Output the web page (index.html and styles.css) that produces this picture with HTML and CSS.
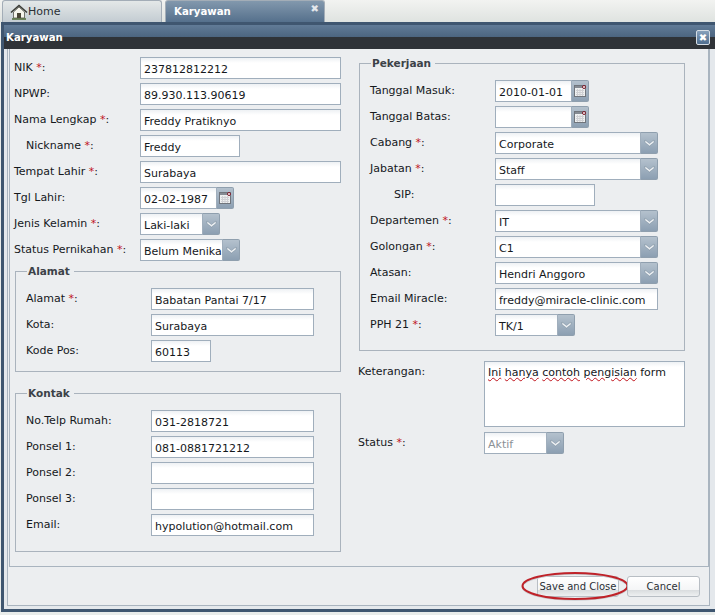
FILE: index.html
```html
<!DOCTYPE html>
<html lang="en">

<head>
    <meta charset="UTF-8">
    <title>Karyawan</title>
    <link rel="stylesheet" href="styles.css">
</head>

<body>
    <svg width="0" height="0" class="defs">
        <symbol id="cal" viewBox="0 0 16 16">
            <rect x="2.5" y="2.5" width="11" height="11" fill="#eef0f0" stroke="#70757c"/>
            <rect x="3" y="3" width="10" height="2" fill="#858b93"/>
            <path d="M4 7.500h8M4 9.500h8M4 11.500h8M5.500 6v7M8 6v7M10.500 6v7" stroke="#cfd0d4" fill="none"/>
            <circle cx="12" cy="4" r="1.500" fill="#fff" stroke="#7c1626"/>
        </symbol>
        <symbol id="chev" viewBox="0 0 17 22">
            <path d="M4 8l4.500 3.500 4.500-3.500v2.500l-4.500 3.500-4.500-3.500z" fill="#eef1f4" stroke="#66788c" stroke-width=".4"/>
        </symbol>
    </svg>

    <div class="tabs">
        <div class="tab home">
            <svg width="18" height="16" viewBox="0 0 18 16">
                <path d="M3.500 8v6h11V8L9 3z" fill="#f6f5ec" stroke="#55564c" stroke-width=".8"/>
                <path d="M1 8.500L9 1.500l8 7" fill="none" stroke="#3a3b34" stroke-width="1.600"/>
                <rect x="7" y="9" width="4" height="5" fill="#4a4636"/>
                <path d="M2 15h14" stroke="#4f6a34" stroke-width="1.500"/>
            </svg>
            <span>Home</span>
        </div>
        <div class="tab active">
            <span>Karyawan</span>
            <span class="tab-x">✖</span>
        </div>
    </div>

    <div class="window">
        <div class="title">
            <span>Karyawan</span>
            <span class="win-x">✖</span>
        </div>
        <div class="panel">
            <div class="form">
                <div class="col left">
                    <div class="row"><div class="lbl">NIK <b>*</b>:</div><div class="field w200">237812812212</div></div>
                    <div class="row"><div class="lbl">NPWP:</div><div class="field w200">89.930.113.90619</div></div>
                    <div class="row"><div class="lbl">Nama Lengkap <b>*</b>:</div><div class="field w200">Freddy Pratiknyo</div></div>
                    <div class="row"><div class="lbl sub">Nickname <b>*</b>:</div><div class="field w100">Freddy</div></div>
                    <div class="row"><div class="lbl">Tempat Lahir <b>*</b>:</div><div class="field w200">Surabaya</div></div>
                    <div class="row"><div class="lbl">Tgl Lahir:</div><div class="field w77">02-02-1987</div><div class="trig"><svg width="16" height="16"><use href="#cal"/></svg></div></div>
                    <div class="row"><div class="lbl">Jenis Kelamin <b>*</b>:</div><div class="field w62">Laki-laki</div><div class="trig"><svg width="17" height="22"><use href="#chev"/></svg></div></div>
                    <div class="row"><div class="lbl">Status Pernikahan <b>*</b>:</div><div class="field w82">Belum Menika</div><div class="trig"><svg width="17" height="22"><use href="#chev"/></svg></div></div>

                    <fieldset class="box alamat">
                        <legend>Alamat</legend>
                        <div class="row"><div class="lbl">Alamat <b>*</b>:</div><div class="field w163">Babatan Pantai 7/17</div></div>
                        <div class="row"><div class="lbl">Kota:</div><div class="field w163">Surabaya</div></div>
                        <div class="row"><div class="lbl">Kode Pos:</div><div class="field w60">60113</div></div>
                    </fieldset>

                    <fieldset class="box kontak">
                        <legend>Kontak</legend>
                        <div class="row"><div class="lbl">No.Telp Rumah:</div><div class="field w163">031-2818721</div></div>
                        <div class="row"><div class="lbl">Ponsel 1:</div><div class="field w163">081-0881721212</div></div>
                        <div class="row"><div class="lbl">Ponsel 2:</div><div class="field w163"></div></div>
                        <div class="row"><div class="lbl">Ponsel 3:</div><div class="field w163"></div></div>
                        <div class="row"><div class="lbl">Email:</div><div class="field w163">hypolution@hotmail.com</div></div>
                    </fieldset>
                </div>

                <div class="col right">
                    <fieldset class="box kerja">
                        <legend>Pekerjaan</legend>
                        <div class="row"><div class="lbl">Tanggal Masuk:</div><div class="field w77">2010-01-01</div><div class="trig"><svg width="16" height="16"><use href="#cal"/></svg></div></div>
                        <div class="row"><div class="lbl">Tanggal Batas:</div><div class="field w77"></div><div class="trig"><svg width="16" height="16"><use href="#cal"/></svg></div></div>
                        <div class="row"><div class="lbl">Cabang <b>*</b>:</div><div class="field w146">Corporate</div><div class="trig"><svg width="17" height="22"><use href="#chev"/></svg></div></div>
                        <div class="row"><div class="lbl">Jabatan <b>*</b>:</div><div class="field w146">Staff</div><div class="trig"><svg width="17" height="22"><use href="#chev"/></svg></div></div>
                        <div class="row"><div class="lbl sub2">SIP:</div><div class="field w100">&nbsp;</div></div>
                        <div class="row"><div class="lbl">Departemen <b>*</b>:</div><div class="field w146">IT</div><div class="trig"><svg width="17" height="22"><use href="#chev"/></svg></div></div>
                        <div class="row"><div class="lbl">Golongan <b>*</b>:</div><div class="field w146">C1</div><div class="trig"><svg width="17" height="22"><use href="#chev"/></svg></div></div>
                        <div class="row"><div class="lbl">Atasan:</div><div class="field w146">Hendri Anggoro</div><div class="trig"><svg width="17" height="22"><use href="#chev"/></svg></div></div>
                        <div class="row"><div class="lbl">Email Miracle:</div><div class="field w163">freddy@miracle-clinic.com</div></div>
                        <div class="row"><div class="lbl">PPH 21 <b>*</b>:</div><div class="field w63">TK/1</div><div class="trig"><svg width="17" height="22"><use href="#chev"/></svg></div></div>
                    </fieldset>

                    <div class="row ket"><div class="lbl">Keterangan:</div><div class="field area"><u>Ini</u> <u>hanya</u> <u>contoh</u> <u>pengisian</u> form</div></div>
                    <div class="row"><div class="lbl">Status <b>*</b>:</div><div class="field w63 off">Aktif</div><div class="trig"><svg width="17" height="22"><use href="#chev"/></svg></div></div>
                </div>
            </div>
            <div class="foot">
                <div class="btn save">Save and Close
                    <svg class="ring" width="108" height="29" viewBox="0 0 108 29">
                        <ellipse cx="54" cy="15" rx="52.500" ry="13" fill="none" stroke="#c9ccd0" stroke-width="1.500"/>
                        <ellipse cx="54" cy="14" rx="52.500" ry="13" fill="none" stroke="#bf2229" stroke-width="2"/>
                    </svg>
                </div>
                <div class="btn">Cancel</div>
            </div>
        </div>
    </div>
</body>

</html>
```

FILE: styles.css
```css
* {
    box-sizing: border-box;
}

body {
    margin: 0;
    width: 715px;
    height: 615px;
    overflow: hidden;
    background-color: #e9ecea;
    color: #15181c;
    font-family: "DejaVu Sans", sans-serif;
    font-size: 11px;
}

.defs {
    position: absolute;
}

.tabs {
    display: flex;
    gap: 3px;
    height: 22px;
    padding-left: 2px;
    background: linear-gradient(#f2f3f1, #dfe3e0);
}

.tab {
    display: flex;
    align-items: center;
    width: 160px;
    border: 1px solid #a3adb7;
    border-bottom: none;
    border-radius: 3px 3px 0 0;
}

.home {
    gap: 0;
    padding-left: 7px;
    background: linear-gradient(#e4e8e8, #c3ccd2);
    color: #2a3036;
}

.active {
    justify-content: space-between;
    padding: 0 5px 0 8px;
    background: linear-gradient(#8298ad, #55708c);
    color: #fff;
    font-size: 10.2px;
    font-weight: bold;
}

.tab-x {
    font-size: 10px;
    color: #e4e8ec;
    margin-top: -6px;
}

.window {
    height: 590px;
    margin-left: 1px;
    border: 3px solid #3f5670;
    border-right: none;
    background-color: #e4e8ec;
}

.title {
    display: flex;
    justify-content: space-between;
    height: 24px;
    padding: 7px 5px 0 2px;
    background: linear-gradient(#617b97 0, #4c6580 12px, #2f3338 12px, #2f3338 100%);
    color: #fff;
    font-size: 10.2px;
    font-weight: bold;
}

.win-x {
    width: 14px;
    height: 15px;
    margin-top: -2px;
    border: 1px solid #d5dde5;
    border-radius: 2px;
    background: linear-gradient(#86a0bb, #4f6e8f);
    font-size: 10px;
    line-height: 13px;
    text-align: center;
}

.panel {
    height: 557px;
    margin: 0 5px 0 3px;
    border: 1px solid #a9b4bf;
    border-top: none;
    background-color: #eceef0;
}

.form {
    display: flex;
    height: 518px;
    margin-left: 1px;
    padding: 8px 0 0 4px;
    border: 1px solid #a9b4bf;
    border-top: none;
}

.col {
    flex: none;
}

.left {
    width: 344px;
}

.row {
    display: flex;
    height: 22px;
    margin-bottom: 4px;
}

.left > .row .lbl {
    width: 126px;
}

.box .lbl {
    width: 125px;
}

.right > .row .lbl {
    width: 126px;
}

.lbl {
    padding-top: 2px;
    line-height: 17px;
    white-space: nowrap;
}

.lbl b {
    color: #c0141c;
    font-weight: normal;
}

.left > .row .sub {
    padding-left: 12px;
}

.box .sub2 {
    padding-left: 24px;
}

.field {
    height: 22px;
    padding: 3px 0 0 3px;
    border: 1px solid #a0aebc;
    background: linear-gradient(#eef1f4, #fff 5px);
    line-height: 17px;
    white-space: nowrap;
    overflow: hidden;
}

.w200 { width: 201px; }
.w163 { width: 163px; }
.w146 { width: 146px; }
.w100 { width: 100px; }
.w82 { width: 83px; }
.w77 { width: 77px; }
.w63 { width: 63px; }
.w62 { width: 63px; }
.w60 { width: 60px; }

.off {
    color: #8b9096;
}

.trig {
    display: flex;
    align-items: center;
    justify-content: center;
    width: 17px;
    height: 22px;
    border: 1px solid #8f9fae;
    border-left: none;
    border-radius: 0 2px 2px 0;
    background: linear-gradient(#b4c1cd, #8c9fb2);
}

.trig svg {
    flex: none;
}

.box {
    margin: 0;
    padding: 10px 0 0 10px;
    border: 1px solid #aab3bd;
}

.box legend {
    margin-left: 1px;
    padding: 0 4px 0 1px;
    color: #3c4248;
    font-size: 10.5px;
    font-weight: bold;
    line-height: 14px;
}

.alamat {
    width: 326px;
    height: 108px;
    margin: -1px 0 14px 1px;
}

.kontak {
    width: 326px;
    height: 166px;
    margin-left: 1px;
}

.right {
    width: 330px;
}

.kerja {
    width: 326px;
    height: 295px;
    margin: -1px 0 10px 1px;
}

.ket {
    height: 66px;
    margin-bottom: 5px;
}

.area {
    width: 201px;
    height: 66px;
    padding-top: 2px;
    line-height: 18px;
}

.area u {
    text-decoration: underline wavy #c0141c 1px;
}

.foot {
    display: flex;
    justify-content: flex-end;
    gap: 8px;
    padding: 9px 9px 0 0;
}

.btn {
    position: relative;
    width: 73px;
    height: 21px;
    border: 1px solid #b8bec4;
    border-radius: 3px;
    background: linear-gradient(#fff 0, #f4f5f6 13px, #d9dcde 13px, #eef0f1 100%);
    font-size: 10px;
    line-height: 20px;
    text-align: center;
    color: #2b3036;
}

.save {
    width: 82px;
    white-space: nowrap;
}

/* red marker drawn over the screenshot */
.ring {
    position: absolute;
    left: -17px;
    top: -5px;
}
```
